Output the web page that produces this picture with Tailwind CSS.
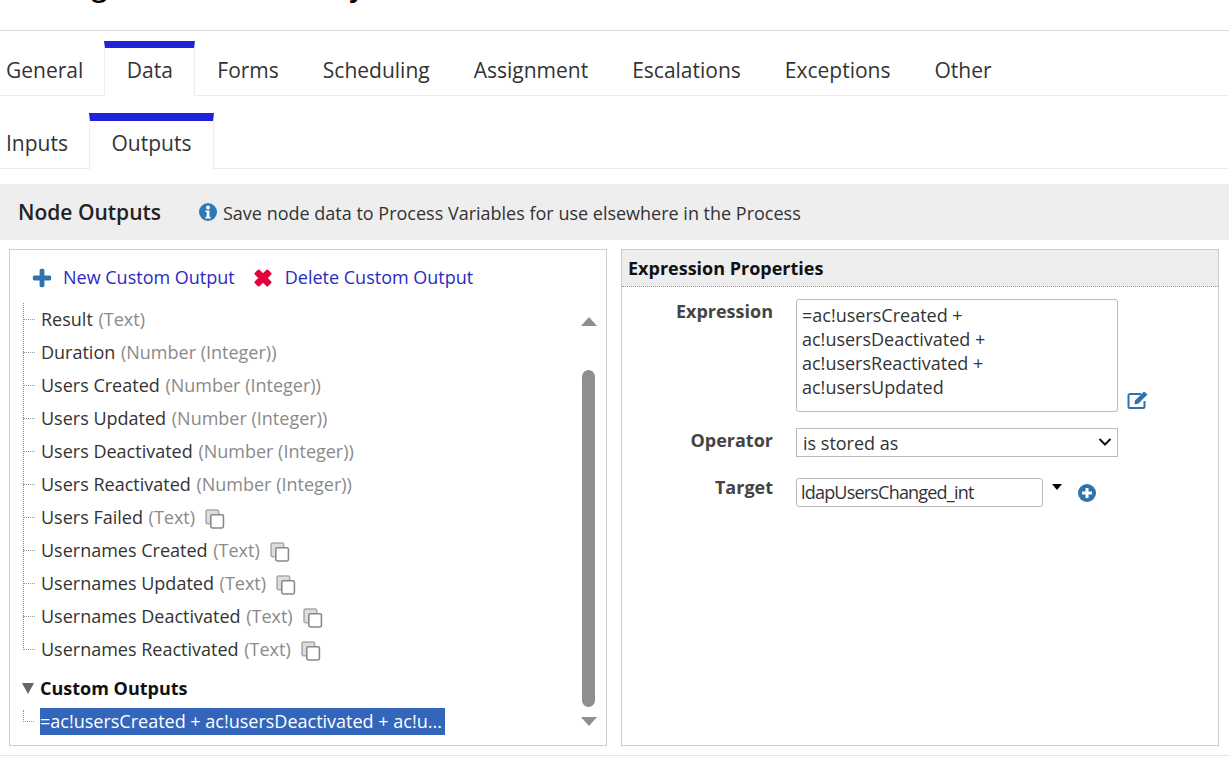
<!DOCTYPE html>
<html>
<head>
<meta charset="utf-8">
<script src="https://cdn.jsdelivr.net/npm/@tailwindcss/browser@4"></script>
</head>
<body class="bg-white overflow-hidden font-['Open_Sans',sans-serif] text-[#333]">
<div class="w-[1229px] h-[757px] overflow-hidden flex flex-col">
  <div class="h-[31px] border-b border-[#d9d9d9] overflow-hidden shrink-0">
    <div class="text-[28.500px] leading-[30px] font-semibold text-black -mt-[30px] pl-[14px] whitespace-nowrap">Manage LDAP Users Daily</div>
  </div>
  <div class="h-[65px] pt-[10px] shrink-0">
    <div class="h-[55px] flex border-b border-[#ececec] text-[21px] text-[#333]">
      <div class="pl-[6px] pr-[21px] pt-[12px] leading-[34px]">General</div>
      <div class="w-[91px] -mb-px h-[55px] bg-white border-t-[7px] border-x border-t-[#2222dd] border-x-[#ececec] text-center pt-[5px] leading-[34px]">Data</div>
      <div class="px-[22px] pt-[12px] leading-[34px]">Forms</div>
      <div class="px-[22px] pt-[12px] leading-[34px]">Scheduling</div>
      <div class="px-[22px] pt-[12px] leading-[34px]">Assignment</div>
      <div class="px-[22px] pt-[12px] leading-[34px]">Escalations</div>
      <div class="px-[22px] pt-[12px] leading-[34px]">Exceptions</div>
      <div class="px-[22px] pt-[12px] leading-[34px]">Other</div>
    </div>
  </div>
  <div class="h-[73px] pt-[17px] shrink-0">
    <div class="h-[56px] flex border-b border-[#ececec] text-[21px]">
      <div class="w-[89px] pl-[6px] pt-[13px] leading-[34px]">Inputs</div>
      <div class="w-[125px] h-[56px] -mb-px bg-white border-t-[8px] border-x border-t-[#2222dd] border-x-[#ececec] text-center pt-[5px] leading-[34px]">Outputs</div>
    </div>
  </div>
  <div class="mt-[15px] h-[56px] pt-[2px] bg-[#eeeeee] flex items-center shrink-0">
    <div class="ml-[18px] w-[181px] text-[21px] font-semibold text-[#222]">Node Outputs</div>
    <svg class="w-[18px] h-[18px] mr-[6px] -mt-[2px]" viewBox="0 0 18 18"><circle cx="9" cy="9" r="9" fill="#2f7ab5"/><circle cx="9" cy="4.6" r="2" fill="#fff"/><path d="M6.4 7.4h4v6.4h1.2v1.6H6.4v-1.6h1.3V9H6.4z" fill="#fff"/></svg>
    <div class="text-[18px] text-[#333]">Save node data to Process Variables for use elsewhere in the Process</div>
  </div>
  <div class="mt-[9px] pl-[9px] pr-[10px] flex gap-[14px] shrink-0">
    <div class="relative w-[598px] h-[497px] border border-[#cccccc]">
      <div class="flex items-center h-[26px] mt-[14px] pl-[22px] text-[18px] text-[#2a2ac4]">
        <svg class="w-[20px] h-[20px] mt-[1px]" viewBox="0 0 20 20"><path d="M7.6 2.4a1.6 1.6 0 0 1 1.6-1.6h1.6a1.6 1.6 0 0 1 1.6 1.6v5.2h5.2a1.6 1.6 0 0 1 1.6 1.6v1.6a1.6 1.6 0 0 1-1.6 1.6h-5.2v5.2a1.6 1.6 0 0 1-1.6 1.6H9.2a1.6 1.6 0 0 1-1.6-1.600v-5.2H2.4a1.6 1.6 0 0 1-1.6-1.6V9.200a1.6 1.6 0 0 1 1.6-1.600h5.2z" fill="#2f73ad"/></svg>
        <span class="ml-[11px]">New Custom Output</span>
        <svg class="ml-[18px] w-[20px] h-[20px] mt-[1px]" viewBox="0 0 20 20"><path d="M3 5.700 5.700 3 10 7.300 14.300 3 17 5.700 12.700 10 17 14.300 14.300 17 10 12.700 5.700 17 3 14.300 7.300 10z" fill="#e4003a" stroke="#e4003a" stroke-width="3" stroke-linejoin="round"/></svg>
        <span class="ml-[12px]">Delete Custom Output</span>
      </div>
      <div class="mt-[13px] ml-[13px] w-[40px] relative">
        <div class="absolute left-0 top-0 h-[345px] border-l border-dotted border-[#888]"></div>
      </div>
      <div class="mt-[13px] flex flex-col text-[18px] leading-[33px] whitespace-nowrap pl-[13px]">
        <div class="flex items-center h-[33px]"><span class="w-[12px] h-0 border-t border-dotted border-[#999] mr-[6px]"></span>Result&nbsp;<span class="text-[#8a8a8a] ml-[1px]">(Text)</span></div>
        <div class="flex items-center h-[33px]"><span class="w-[12px] h-0 border-t border-dotted border-[#999] mr-[6px]"></span>Duration&nbsp;<span class="text-[#8a8a8a] ml-[1px]">(Number (Integer))</span></div>
        <div class="flex items-center h-[33px]"><span class="w-[12px] h-0 border-t border-dotted border-[#999] mr-[6px]"></span>Users Created&nbsp;<span class="text-[#8a8a8a] ml-[1px]">(Number (Integer))</span></div>
        <div class="flex items-center h-[33px]"><span class="w-[12px] h-0 border-t border-dotted border-[#999] mr-[6px]"></span>Users Updated&nbsp;<span class="text-[#8a8a8a] ml-[1px]">(Number (Integer))</span></div>
        <div class="flex items-center h-[33px]"><span class="w-[12px] h-0 border-t border-dotted border-[#999] mr-[6px]"></span>Users Deactivated&nbsp;<span class="text-[#8a8a8a] ml-[1px]">(Number (Integer))</span></div>
        <div class="flex items-center h-[33px]"><span class="w-[12px] h-0 border-t border-dotted border-[#999] mr-[6px]"></span>Users Reactivated&nbsp;<span class="text-[#8a8a8a] ml-[1px]">(Number (Integer))</span></div>
        <div class="flex items-center h-[33px]"><span class="w-[12px] h-0 border-t border-dotted border-[#999] mr-[6px]"></span>Users Failed&nbsp;<span class="text-[#8a8a8a] ml-[1px]">(Text)</span><svg class="ml-[10px] mt-[3px] w-[20px] h-[20px]" viewBox="0 0 19 19" fill="none"><path d="M5 14H2.500A1.500 1.500 0 0 1 1 12.500V2.500A1.500 1.500 0 0 1 2.500 1h9A1.500 1.500 0 0 1 13 2.500V5" stroke="#aaa" stroke-width="1.500" fill="#ddd"/><rect x="5.500" y="5.500" width="12" height="12.500" rx="1.500" fill="#fff" stroke="#888" stroke-width="1.500"/></svg></div>
        <div class="flex items-center h-[33px]"><span class="w-[12px] h-0 border-t border-dotted border-[#999] mr-[6px]"></span>Usernames Created&nbsp;<span class="text-[#8a8a8a] ml-[1px]">(Text)</span><svg class="ml-[10px] mt-[3px] w-[20px] h-[20px]" viewBox="0 0 19 19" fill="none"><path d="M5 14H2.500A1.500 1.500 0 0 1 1 12.500V2.500A1.500 1.500 0 0 1 2.500 1h9A1.500 1.500 0 0 1 13 2.500V5" stroke="#aaa" stroke-width="1.500" fill="#ddd"/><rect x="5.500" y="5.500" width="12" height="12.500" rx="1.500" fill="#fff" stroke="#888" stroke-width="1.500"/></svg></div>
        <div class="flex items-center h-[33px]"><span class="w-[12px] h-0 border-t border-dotted border-[#999] mr-[6px]"></span>Usernames Updated&nbsp;<span class="text-[#8a8a8a] ml-[1px]">(Text)</span><svg class="ml-[10px] mt-[3px] w-[20px] h-[20px]" viewBox="0 0 19 19" fill="none"><path d="M5 14H2.500A1.500 1.500 0 0 1 1 12.500V2.500A1.500 1.500 0 0 1 2.500 1h9A1.500 1.500 0 0 1 13 2.500V5" stroke="#aaa" stroke-width="1.500" fill="#ddd"/><rect x="5.500" y="5.500" width="12" height="12.500" rx="1.500" fill="#fff" stroke="#888" stroke-width="1.500"/></svg></div>
        <div class="flex items-center h-[33px]"><span class="w-[12px] h-0 border-t border-dotted border-[#999] mr-[6px]"></span>Usernames Deactivated&nbsp;<span class="text-[#8a8a8a] ml-[1px]">(Text)</span><svg class="ml-[10px] mt-[3px] w-[20px] h-[20px]" viewBox="0 0 19 19" fill="none"><path d="M5 14H2.500A1.500 1.500 0 0 1 1 12.500V2.500A1.500 1.500 0 0 1 2.500 1h9A1.500 1.500 0 0 1 13 2.500V5" stroke="#aaa" stroke-width="1.500" fill="#ddd"/><rect x="5.500" y="5.500" width="12" height="12.500" rx="1.500" fill="#fff" stroke="#888" stroke-width="1.500"/></svg></div>
        <div class="flex items-center h-[33px]"><span class="w-[12px] h-0 border-t border-dotted border-[#999] mr-[6px]"></span>Usernames Reactivated&nbsp;<span class="text-[#8a8a8a] ml-[1px]">(Text)</span><svg class="ml-[10px] mt-[3px] w-[20px] h-[20px]" viewBox="0 0 19 19" fill="none"><path d="M5 14H2.500A1.500 1.500 0 0 1 1 12.500V2.500A1.500 1.500 0 0 1 2.500 1h9A1.500 1.500 0 0 1 13 2.500V5" stroke="#aaa" stroke-width="1.500" fill="#ddd"/><rect x="5.500" y="5.500" width="12" height="12.500" rx="1.500" fill="#fff" stroke="#888" stroke-width="1.500"/></svg></div>
        <div class="flex items-center h-[33px] mt-[6px] font-bold text-[#111] text-[18px]"><span class="w-0 h-0 border-x-[6px] border-x-transparent border-t-[11px] border-t-[#666] mr-[6px] -ml-[1px]"></span>Custom Outputs</div>
        <div class="flex items-center h-[27px] mt-[3px]"><span class="w-[11px] h-[12px] -mt-[12px] border-l border-b border-dotted border-[#999] mr-[6px]"></span><span class="bg-[#3366bb] text-white h-[27px] leading-[27px] w-[405px] overflow-hidden">=ac!usersCreated + ac!usersDeactivated + ac!u...</span></div>
      </div>
      <div class="absolute left-[571px] top-[67px] w-0 h-0 border-x-[8px] border-x-transparent border-b-[9px] border-b-[#8f8f8f]"></div>
      <div class="absolute left-[572px] top-[120px] w-[13px] h-[337px] rounded-full bg-[#8f8f8f]"></div>
      <div class="absolute left-[571px] top-[467px] w-0 h-0 border-x-[8px] border-x-transparent border-t-[9px] border-t-[#8f8f8f]"></div>
    </div>
    <div class="w-[598px] h-[497px] border border-[#cccccc]">
      <div class="h-[37px] bg-[#eeeeee] border-b border-dotted border-[#999] pl-[6px] leading-[36px] text-[18px] font-bold text-[#111]">Expression Properties</div>
      <div class="mt-[12px] flex">
        <div class="w-[151px] -mt-[1px] text-right text-[18px] font-bold text-[#444] leading-[26px]">Expression</div>
        <div class="ml-[23px] w-[322px] h-[113px] border border-[#bbb] rounded-[3px] pl-[5px] pt-[3px] text-[18px] leading-[24px] text-[#333]">=ac!usersCreated +<br>ac!usersDeactivated +<br>ac!usersReactivated +<br>ac!usersUpdated</div>
        <svg class="ml-[9px] mt-[91px] w-[22px] h-[20px]" viewBox="0 0 22 20" fill="none"><path d="M14 4H3A1.500 1.500 0 0 0 1.500 5.500v11A1.500 1.500 0 0 0 3 18h13a1.500 1.500 0 0 0 1.500-1.500V11" stroke="#2f73ad" stroke-width="2"/><path d="M8 10.500 17 1.500l3.500 3-9 9-4 1z" fill="#2f73ad"/></svg>
      </div>
      <div class="mt-[16px] flex">
        <div class="w-[151px] -mt-[1px] text-right text-[18px] font-bold text-[#444] leading-[26px]">Operator</div>
        <div class="ml-[23px] w-[322px] h-[29px] border border-[#bbb] pl-[6px] pr-[5px] flex items-center justify-between text-[18px] text-[#333]"><span class="mt-[1px]">is stored as</span><svg class="w-[14px] h-[10px] -mt-[1px]" viewBox="0 0 14 10" fill="none"><path d="M1.500 2 7 7.500 12.500 2" stroke="#111" stroke-width="2"/></svg></div>
      </div>
      <div class="mt-[21px] flex">
        <div class="w-[151px] -mt-[4px] text-right text-[18px] font-bold text-[#444] leading-[26px]">Target</div>
        <div class="ml-[23px] w-[247px] h-[29px] border border-[#bbb] rounded-[3px] pl-[4px] text-[18px] tracking-[-0.8px] leading-[27px] text-[#333]">ldapUsersChanged_int</div>
        <span class="ml-[9px] mt-[6px] w-0 h-0 border-x-[5px] border-x-transparent border-t-[6px] border-t-black"></span>
        <svg class="ml-[16px] mt-[6px] w-[18px] h-[18px]" viewBox="0 0 18 18"><circle cx="9" cy="9" r="9" fill="#2f73ad"/><path d="M7.500 4h3v3.500H14v3h-3.500V14h-3v-3.500H4v-3h3.500z" fill="#fff"/></svg>
      </div>
    </div>
  </div>
  <div class="mt-[9px] border-t border-[#e5e5e5]"></div>
</div>
</body>
</html>
